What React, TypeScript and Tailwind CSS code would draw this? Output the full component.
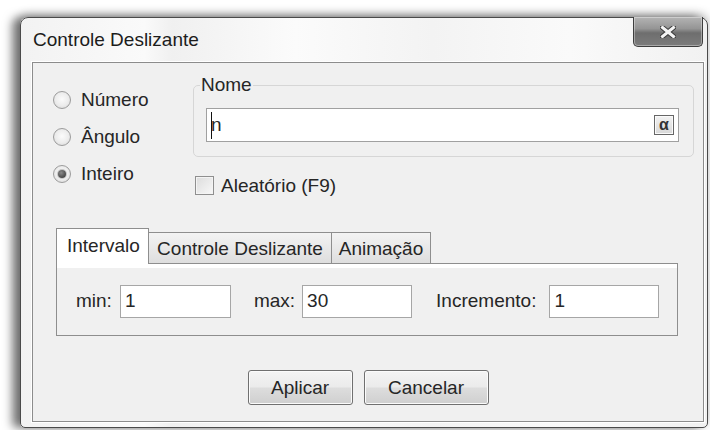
import { type ReactNode } from 'react';

// GeoGebra-style "Controle Deslizante" dialog in a Win7 basic-theme window frame

function Radio({ label, checked }: { label: string; checked?: boolean }) {
  return (
    <div className="flex h-[37px] items-center gap-[10px]">
      <span className="flex h-[18px] w-[18px] items-center justify-center rounded-full border border-[#9c9c9c] bg-[radial-gradient(circle_at_50%_45%,#fbfbfb_0%,#ececec_55%,#d2d2d2_100%)]">
        {checked && (
          <span className="h-[8px] w-[8px] rounded-full bg-[radial-gradient(circle_at_40%_35%,#8a8a8a,#2e2e2e)] shadow-[0_0_0_1px_#c4c4c4]" />
        )}
      </span>
      <span>{label}</span>
    </div>
  );
}

function Field({ value, width }: { value: string; width: string }) {
  return (
    <div className={`flex h-[33px] items-center border border-[#a6a6a6] bg-white pl-[4px] ${width}`}>{value}</div>
  );
}

function Tab({ children, active, className }: { children: ReactNode; active?: boolean; className?: string }) {
  if (active) {
    return (
      <div className={`relative z-10 -mb-px h-[36px] border border-b-0 border-[#8e8e8e] bg-white pl-[10px] pt-[6px] ${className ?? ''}`}>
        {children}
      </div>
    );
  }
  return (
    <div
      className={`h-[31px] border border-b-0 border-l-0 border-[#8e8e8e] bg-[linear-gradient(to_bottom,#f3f3f3,#dedede)] pt-[5px] text-center ${className ?? ''}`}
    >
      {children}
    </div>
  );
}

function WinButton({ label, width }: { label: string; width: string }) {
  return (
    <button
      className={`h-[35px] rounded-[3px] border border-[#707070] bg-[linear-gradient(to_bottom,#f4f4f4_0%,#ebebeb_48%,#dddddd_52%,#cfcfcf_100%)] text-[#262626] shadow-[inset_0_0_0_1px_#fbfbfb] ${width}`}
    >
      {label}
    </button>
  );
}

export default function App() {
  return (
    <div className="h-[430px] w-[710px] overflow-hidden bg-white pl-[20px] pt-[17px] font-['Liberation_Sans',Arial,sans-serif] text-[19px] leading-[22px] text-[#262626]">
      <div className="flex h-[411px] w-[688px] flex-col rounded-t-[8px] rounded-b-[5px] border border-[#4a4a4a] bg-[linear-gradient(to_right,#f2f2f2_0%,#fafafa_18%,#f0f0f0_22%,#fbfbfb_40%,#f3f3f3_60%,#fafafa_80%,#f1f1f1_100%)] shadow-[-8px_0_10px_rgba(0,0,0,0.5),0_-3px_10px_rgba(0,0,0,0.25)]">
        {/* title bar */}
        <div className="flex h-[44px] shrink-0 items-center justify-between pl-[12px] pr-[4px]">
          <span className="text-[#1c1c1c]">Controle Deslizante</span>
          <button className="-mt-px flex h-[30px] w-[70px] items-center justify-center self-start rounded-b-[5px] border border-t-0 border-[#3e3e3e] bg-[linear-gradient(to_bottom,#b4b4b4_0%,#959595_40%,#6e6e6e_55%,#7c7c7c_100%)] shadow-[inset_0_0_0_1px_rgba(255,255,255,0.35)]">
            <svg width="16" height="12" viewBox="0 0 16 12">
              <path d="M2.5 1.5 L13.5 10.5 M13.5 1.5 L2.5 10.5" stroke="#3a3a3a" strokeWidth="5" strokeLinecap="square" />
              <path d="M2.5 1.5 L13.5 10.5 M13.5 1.5 L2.5 10.5" stroke="#f4f4f4" strokeWidth="3" strokeLinecap="square" />
            </svg>
          </button>
        </div>

        {/* dialog content */}
        <div className="ml-[11px] h-[360px] w-[672px] border border-[#8c8c8c] bg-[#f0f0f0] shadow-[0_0_0_1px_#ffffff]">
          <div className="flex">
            <div className="w-[160px] pl-[20px] pt-[18px]">
              <Radio label="Número" />
              <Radio label="Ângulo" />
              <Radio label="Inteiro" checked />
            </div>
            <div className="w-[501px] pt-[11px]">
              <fieldset className="rounded-[5px] border border-[#d6d6d6] pb-[14px] pt-[12px]">
                <legend className="ml-[6px] px-[1px]">Nome</legend>
                <div className="ml-[12px] flex h-[34px] w-[473px] items-center border border-[#a0a0a0] bg-white pl-[4px]">
                  <span className="h-[27px] w-px bg-[#111]" />
                  <span className="-ml-px">n</span>
                  <span className="ml-auto mr-[4px] flex h-[20px] w-[20px] items-center justify-center border border-[#666] bg-[linear-gradient(to_bottom,#f2f2f2,#d8d8d8)] text-[16px] font-bold leading-none text-[#333] shadow-[inset_0_0_0_1px_#fafafa]">
                    α
                  </span>
                </div>
              </fieldset>
              <div className="ml-[2px] mt-[19px] flex h-[19px] items-center gap-[7px]">
                <span className="h-[19px] w-[19px] border border-[#8f8f8f] bg-[linear-gradient(135deg,#dcdcdc,#f8f8f8)] shadow-[inset_0_0_0_1px_#f4f4f4]" />
                <span>Aleatório (F9)</span>
              </div>
            </div>
          </div>

          {/* tabbed pane */}
          <div className="ml-[23px] mt-[33px] w-[622px]">
            <div className="flex h-[35px] items-end">
              <Tab active className="w-[93px]">
                Intervalo
              </Tab>
              <Tab className="w-[183px]">Controle Deslizante</Tab>
              <Tab className="w-[99px]">Animação</Tab>
            </div>
            <div className="flex h-[73px] items-center border border-[#8e8e8e] bg-[#f0f0f0] pl-[19px] pt-[3px] shadow-[inset_0_4px_0_#ffffff]">
              <span>min:</span>
              <div className="ml-[8px]">
                <Field value="1" width="w-[111px]" />
              </div>
              <span className="ml-[23px]">max:</span>
              <div className="ml-[7px]">
                <Field value="30" width="w-[110px]" />
              </div>
              <span className="ml-[24px]">Incremento:</span>
              <div className="ml-[13px]">
                <Field value="1" width="w-[110px]" />
              </div>
            </div>
          </div>

          <div className="mt-[34px] flex justify-center gap-[11px]">
            <WinButton label="Aplicar" width="w-[105px]" />
            <WinButton label="Cancelar" width="w-[125px]" />
          </div>
        </div>
      </div>
    </div>
  );
}
